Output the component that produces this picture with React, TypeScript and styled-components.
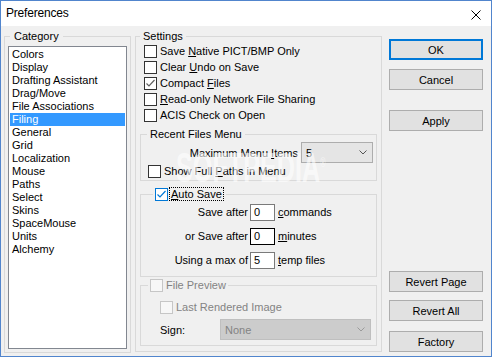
import React from "react";
import styled, { createGlobalStyle, css } from "styled-components";

const font = `"Liberation Sans", Arial, sans-serif`;

const GlobalStyle = createGlobalStyle`
  * { box-sizing: border-box; }
  body {
    margin: 0;
    background: #ffffff;
  }
`;

const Window = styled.div`
  position: relative;
  width: 492px;
  height: 357px;
  border: 1px solid #5185cd;
  background: #f0f0f0;
  font-family: ${font};
  font-size: 11px;
  color: #000;
  display: flex;
  flex-direction: column;
  overflow: hidden;
`;

const TitleBar = styled.div`
  height: 25px;
  flex-shrink: 0;
  background: #ffffff;
  display: flex;
  align-items: center;
  justify-content: space-between;
  padding-left: 5px;
`;

const TitleText = styled.span`
  font-size: 12px;
  letter-spacing: -0.2px;
  padding-bottom: 1px;
`;

const CloseBox = styled.div`
  width: 30px;
  height: 25px;
  display: flex;
  align-items: center;
  justify-content: center;
  padding-top: 3px;
`;

const Body = styled.div`
  display: flex;
  padding: 4px 0 0 3px;
`;

const Group = styled.fieldset<{ $w?: number; $h?: number; $mt?: number; $pad?: string }>`
  margin: ${(p) => p.$mt ?? 0}px 0 0 0;
  min-width: 0;
  border: 1px solid #d9d9d9;
  padding: ${(p) => p.$pad ?? "0"};
  ${(p) => p.$w && css`width: ${p.$w}px; flex-shrink: 0;`}
  ${(p) => p.$h && css`height: ${p.$h}px;`}
`;

const Legend = styled.legend<{ $ml: number; $px?: number }>`
  margin-left: ${(p) => p.$ml}px;
  padding: 0 ${(p) => p.$px ?? 3}px;
  line-height: 13px;
  display: flex;
  align-items: center;
`;

const ListBox = styled.div`
  height: 303px;
  border: 1px solid #828790;
  background: #ffffff;
  padding: 1px;
  overflow: hidden;
`;

const ListItem = styled.div<{ $selected?: boolean }>`
  height: 13px;
  line-height: 13px;
  padding-left: 2px;
  white-space: nowrap;
  ${(p) =>
    p.$selected &&
    css`
      background: #3399ff;
      color: #ffffff;
    `}
`;

const CheckRow = styled.div<{ $pl: number }>`
  height: 16px;
  display: flex;
  align-items: center;
  padding-left: ${(p) => p.$pl}px;
  white-space: nowrap;
`;

type BoxKind = "normal" | "gray" | "focus" | "disabled";

const Box = styled.span<{ $kind: BoxKind }>`
  width: 13px;
  height: 13px;
  flex-shrink: 0;
  display: inline-flex;
  border: 1px solid
    ${(p) =>
      p.$kind === "focus" ? "#0078d7" : p.$kind === "disabled" ? "#c6c6c6" : "#333333"};
  background: ${(p) => (p.$kind === "disabled" ? "#f7f7f7" : "#ffffff")};
  margin-right: 3px;
`;

const Label = styled.span<{ $disabled?: boolean }>`
  color: ${(p) => (p.$disabled ? "#838383" : "#000")};
`;

const FocusLabel = styled.span`
  border: 1px dotted #000;
  padding: 0 1px;
  line-height: 12px;
  margin-left: -2px;
`;

const U = styled.span`
  text-decoration: underline;
`;

const MaxRow = styled.div`
  display: flex;
  justify-content: flex-end;
  align-items: center;
  gap: 3px;
  padding-right: 3px;
  margin-top: 1px;
`;

const Select = styled.div<{ $w: number; $disabled?: boolean }>`
  width: ${(p) => p.$w}px;
  height: 21px;
  display: flex;
  align-items: center;
  justify-content: space-between;
  padding: 0 5px 0 4px;
  border: 1px solid ${(p) => (p.$disabled ? "#bfbfbf" : "#adadad")};
  background: ${(p) => (p.$disabled ? "#cccccc" : "#e5e5e5")};
  color: ${(p) => (p.$disabled ? "#838383" : "#000")};
`;

const SaveGrid = styled.div`
  display: grid;
  grid-template-columns: 109px 25px auto;
  grid-auto-rows: 17px;
  row-gap: 7px;
  padding: 3px 0 7px;
`;

const RowLabel = styled.span`
  text-align: right;
  padding-right: 2px;
  line-height: 17px;
  white-space: nowrap;
`;

const NumBox = styled.div<{ $dark?: boolean }>`
  height: 17px;
  border: 1px solid ${(p) => (p.$dark ? "#000000" : "#7a7a7a")};
  background: #ffffff;
  padding-left: 3px;
  line-height: 15px;
`;

const Unit = styled.span`
  padding-left: 3px;
  line-height: 17px;
  white-space: nowrap;
`;

const PreviewBody = styled.div`
  padding: 7px 0 5px;
`;

const SignRow = styled.div`
  display: flex;
  align-items: center;
  margin-top: 4px;
  padding-left: 19px;
`;

const SignLabel = styled.span`
  width: 60px;
`;

const ButtonColumn = styled.div`
  width: 94px;
  height: 322px;
  margin-left: 7px;
  display: flex;
  flex-direction: column;
`;

const Btn = styled.button<{ $mt: number; $default?: boolean }>`
  width: 94px;
  height: 21px;
  margin-top: ${(p) => p.$mt}px;
  padding: 0;
  background: #e1e1e1;
  border: 1px solid #adadad;
  font-family: ${font};
  font-size: 11px;
  color: #000;
  ${(p) => p.$default && css`border: 2px solid #0078d7;`}
`;

const Spacer = styled.div`
  flex: 1;
`;

const Watermark = styled.span`
  position: absolute;
  left: 175px;
  top: 143px;
  font-family: ${font};
  font-weight: bold;
  font-size: 42px;
  color: rgba(255, 255, 255, 0.6);
  transform: scaleX(0.6);
  transform-origin: left top;
  pointer-events: none;
  white-space: nowrap;
`;

const Reg = styled.sup`
  font-size: 12px;
  font-weight: normal;
`;

const Check = ({ kind = "normal", checked = false }: { kind?: BoxKind; checked?: boolean }) => (
  <Box $kind={kind}>
    {checked && (
      <svg width="11" height="11" viewBox="0 0 11 11">
        <polyline
          points="1.5,5.5 4,8 9.5,2"
          fill="none"
          stroke={kind === "focus" ? "#0078d7" : "#606060"}
          strokeWidth="1.2"
        />
      </svg>
    )}
  </Box>
);

const Chevron = ({ color }: { color: string }) => (
  <svg width="8" height="5" viewBox="0 0 8 5">
    <polyline points="0.5,0.5 4,4 7.5,0.5" fill="none" stroke={color} strokeWidth="1" />
  </svg>
);

const categories = [
  "Colors",
  "Display",
  "Drafting Assistant",
  "Drag/Move",
  "File Associations",
  "Filing",
  "General",
  "Grid",
  "Localization",
  "Mouse",
  "Paths",
  "Select",
  "Skins",
  "SpaceMouse",
  "Units",
  "Alchemy",
];

const App = () => {
  return (
    <>
      <GlobalStyle />
      <Window>
        <TitleBar>
          <TitleText>Preferences</TitleText>
          <CloseBox>
            <svg width="10" height="10" viewBox="0 0 10 10">
              <path d="M0.5 0.5 L9.5 9.5 M9.5 0.5 L0.5 9.5" stroke="#000" strokeWidth="1" />
            </svg>
          </CloseBox>
        </TitleBar>
        <Body>
          <Group $w={127} $h={323} $pad="3px">
            <Legend $ml={2} $px={4}>Category</Legend>
            <ListBox>
              {categories.map((c) => (
                <ListItem key={c} $selected={c === "Filing"}>
                  {c}
                </ListItem>
              ))}
            </ListBox>
          </Group>

          <Group $w={247} $h={322} $pad="0 4px 5px 4px" style={{ marginLeft: 4 }}>
            <Legend $ml={0}>Settings</Legend>
            <CheckRow $pl={4}>
              <Check />
              <Label>
                Save <U>N</U>ative PICT/BMP Only
              </Label>
            </CheckRow>
            <CheckRow $pl={4}>
              <Check />
              <Label>
                Clear <U>U</U>ndo on Save
              </Label>
            </CheckRow>
            <CheckRow $pl={4}>
              <Check checked />
              <Label>
                Compact <U>F</U>iles
              </Label>
            </CheckRow>
            <CheckRow $pl={4}>
              <Check />
              <Label>
                <U>R</U>ead-only Network File Sharing
              </Label>
            </CheckRow>
            <CheckRow $pl={4}>
              <Check />
              <Label>ACIS Check on Open</Label>
            </CheckRow>

            <Group $mt={5} $pad="0 0 1px 0">
              <Legend $ml={6}>Recent Files Menu</Legend>
              <MaxRow>
                <Label>
                  Maximum Menu <U>I</U>tems
                </Label>
                <Select $w={72}>
                  <span>5</span>
                  <Chevron color="#555" />
                </Select>
              </MaxRow>
              <CheckRow $pl={7}>
                <Check />
                <Label>
                  Show Full <U>P</U>aths in Menu
                </Label>
              </CheckRow>
            </Group>

            <Group $mt={6}>
              <Legend $ml={12} $px={2}>
                <Check kind="focus" checked />
                <FocusLabel>
                  <U>A</U>uto Save
                </FocusLabel>
              </Legend>
              <SaveGrid>
                <RowLabel>Save after</RowLabel>
                <NumBox>0</NumBox>
                <Unit>
                  <U>c</U>ommands
                </Unit>
                <RowLabel>or Save after</RowLabel>
                <NumBox $dark>0</NumBox>
                <Unit>
                  <U>m</U>inutes
                </Unit>
                <RowLabel>Using a max of</RowLabel>
                <NumBox>5</NumBox>
                <Unit>
                  <U>t</U>emp files
                </Unit>
              </SaveGrid>
            </Group>

            <Group $mt={2}>
              <Legend $ml={7} $px={2}>
                <Check kind="disabled" />
                <Label $disabled>File Preview</Label>
              </Legend>
              <PreviewBody>
                <CheckRow $pl={19}>
                  <Check kind="disabled" />
                  <Label $disabled>Last Rendered Image</Label>
                </CheckRow>
                <SignRow>
                  <SignLabel>Sign:</SignLabel>
                  <Select $w={151} $disabled>
                    <span>None</span>
                    <Chevron color="#9a9a9a" />
                  </Select>
                </SignRow>
              </PreviewBody>
            </Group>
          </Group>

          <ButtonColumn>
            <Btn $mt={9} $default>
              OK
            </Btn>
            <Btn $mt={9}>Cancel</Btn>
            <Btn $mt={20}>Apply</Btn>
            <Spacer />
            <Btn $mt={0}>Revert Page</Btn>
            <Btn $mt={8}>Revert All</Btn>
            <Btn $mt={10}>Factory</Btn>
          </ButtonColumn>
        </Body>
        <Watermark>
          SOFTPEDIA<Reg>®</Reg>
        </Watermark>
      </Window>
    </>
  );
};

export default App;
